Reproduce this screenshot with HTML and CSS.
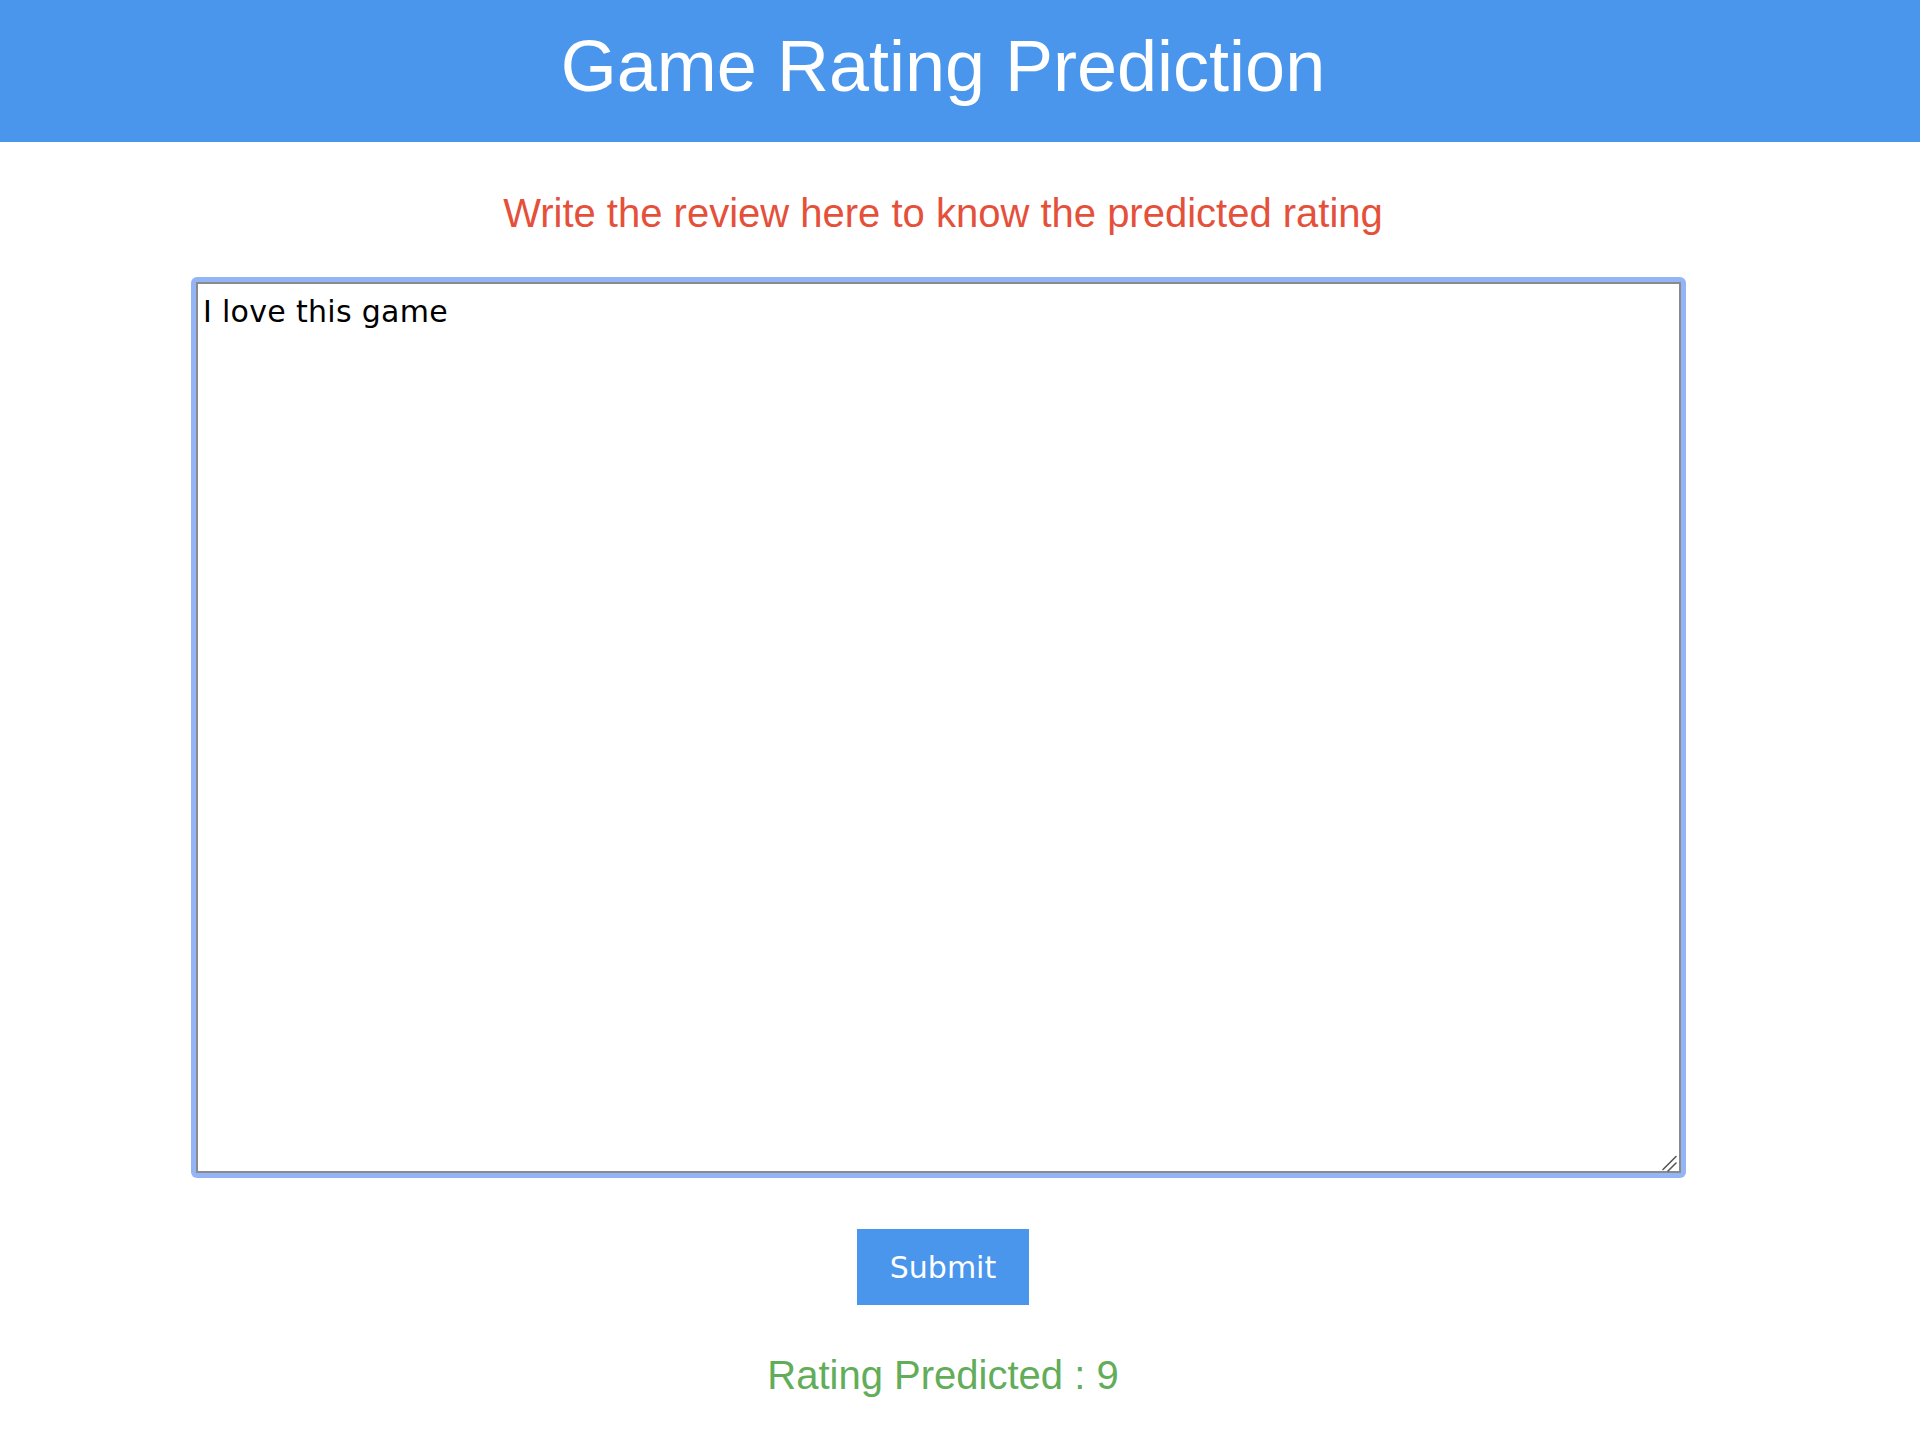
FILE: index.html
```html
<!DOCTYPE html>
<html lang="en">
<head>
<meta charset="utf-8">
<title>Game Rating Prediction</title>
<link rel="stylesheet" href="styles.css">
</head>
<body>
<header class="topbar">
  <h1 class="topbar-title">Game Rating Prediction</h1>
</header>
<main class="content">
  <p class="prompt">Write the review here to know the predicted rating</p>
  <form class="review-form">
    <div class="focus-ring">
      <textarea class="review-input">I love this game</textarea>
      <svg class="resize-grip" width="18" height="18" viewBox="0 0 18 18" aria-hidden="true">
        <line x1="3" y1="15.5" x2="16" y2="2.5" stroke="#555" stroke-width="1.6" stroke-linecap="round"/>
        <line x1="8" y1="17" x2="16" y2="9" stroke="#555" stroke-width="1.6" stroke-linecap="round"/>
      </svg>
    </div>
    <button type="button" class="submit-btn">Submit</button>
  </form>
  <p class="result">Rating Predicted : 9</p>
</main>
</body>
</html>
```

FILE: styles.css
```css
html, body {
  margin: 0;
  padding: 0;
  background: #ffffff;
}

body {
  font-family: "Liberation Sans", Arial, Helvetica, sans-serif;
}

.topbar {
  background: #4a96ec;
  padding: 26px 34px 36px 0;
}

.topbar-title {
  margin: 0;
  font-size: 72px;
  font-weight: 400;
  line-height: 80px;
  color: #ffffff;
  text-align: center;
}

.content {
  padding-right: 34px;
  display: flex;
  flex-direction: column;
  align-items: center;
}

.prompt {
  margin: 49px 0 0 0;
  font-size: 40px;
  line-height: 45px;
  color: #e5503b;
  text-align: center;
}

.review-form {
  display: flex;
  flex-direction: column;
  align-items: center;
  margin-top: 41px;
}

.focus-ring {
  position: relative;
  padding: 5px;
  border-radius: 6px;
  background: #93b5f6;
  margin-right: 9px;
}

.review-input {
  display: block;
  box-sizing: border-box;
  width: 1485px;
  height: 891px;
  margin: 0;
  border: 2px solid #8a8a8a;
  padding: 10px 5px;
  background: #ffffff;
  color: #000000;
  font-family: "DejaVu Sans", Verdana, sans-serif;
  font-size: 30px;
  letter-spacing: 0.3px;
  line-height: 36px;
  outline: none;
  resize: none;
}

.resize-grip {
  position: absolute;
  right: 8px;
  bottom: 6px;
  display: block;
}

.submit-btn {
  margin-top: 51px;
  width: 172px;
  height: 76px;
  border: none;
  padding: 0;
  background: #4a96ec;
  color: #ffffff;
  font-family: "DejaVu Sans", Verdana, sans-serif;
  font-size: 30px;
}

.result {
  margin: 48px 0 0 0;
  font-size: 40px;
  line-height: 45px;
  color: #62ad5a;
  text-align: center;
}
```
